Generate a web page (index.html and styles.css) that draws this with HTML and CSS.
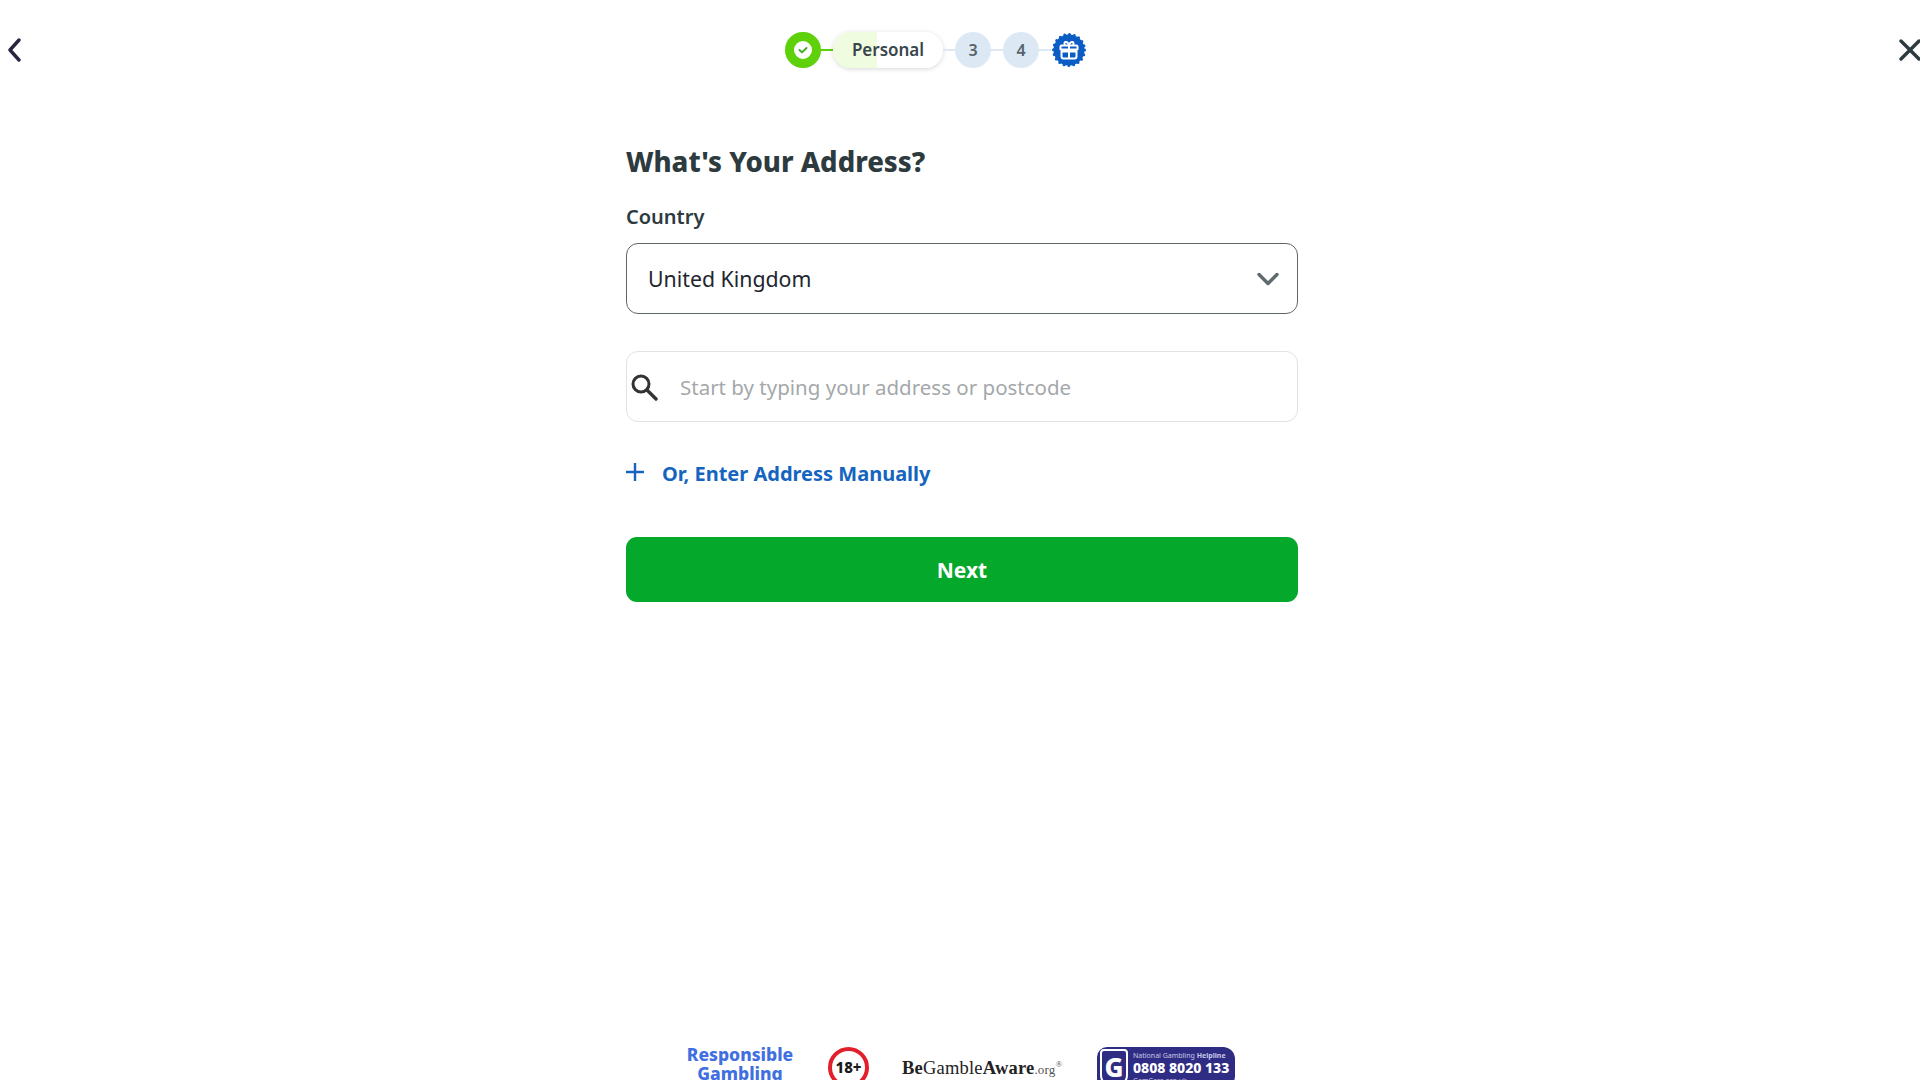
FILE: index.html
```html
<!DOCTYPE html>
<html lang="en">
<head>
    <meta charset="UTF-8">
    <meta name="viewport" content="width=device-width, initial-scale=1.0">
    <title>What's Your Address?</title>
    <link rel="stylesheet" href="styles.css">
</head>
<body>
    <header class="top-bar">
        <button class="icon-button back-button" aria-label="Back">
            <svg width="14" height="24" viewBox="0 0 14 24"><path d="M12 2 3 12l9 10" fill="none" stroke="#2b2440" stroke-width="3.4" stroke-linecap="round" stroke-linejoin="round"/></svg>
        </button>

        <div class="stepper">
            <span class="step step-done">
                <svg width="36" height="36" viewBox="0 0 36 36"><circle cx="18" cy="18" r="13.5" fill="#fff" stroke="#5ed10a" stroke-width="9"/><path d="M14.500 18l2.500 2.400 4.500-4.400" fill="none" stroke="#3fae2a" stroke-width="2" stroke-linecap="round" stroke-linejoin="round"/></svg>
            </span>
            <span class="step-line step-line-done"></span>
            <span class="step-pill">Personal</span>
            <span class="step-line"></span>
            <span class="step">3</span>
            <span class="step-line"></span>
            <span class="step">4</span>
            <span class="step-line"></span>
            <span class="step-gift">
                <svg width="36" height="36" viewBox="0 0 36 36">
                    <circle cx="18" cy="18" r="15.5" fill="#0b5cc4"/>
                    <circle cx="18" cy="18" r="15.5" fill="none" stroke="#0b5cc4" stroke-width="3" stroke-linecap="round" stroke-dasharray="0 4.87"/>
                    <path d="M10.5 13.5h15a1 1 0 0 1 1 1v3h-17v-3a1 1 0 0 1 1-1zM10.5 19.500h15v5a2 2 0 0 1-2 2h-11a2 2 0 0 1-2-2z" fill="none" stroke="#fff" stroke-width="2" stroke-linejoin="round"/>
                    <path d="M18 13v13M14 13c-2-3 2-5 4 0 2-5 6-3 4 0" fill="none" stroke="#fff" stroke-width="2"/>
                </svg>
            </span>
        </div>

        <button class="icon-button close-button" aria-label="Close">
            <svg width="22" height="22" viewBox="0 0 22 22"><path d="M2 2l18 18M20 2 2 20" fill="none" stroke="#2d3b3f" stroke-width="3.4" stroke-linecap="round"/></svg>
        </button>
    </header>

    <main class="address-form">
        <h1 class="form-title">What's Your Address?</h1>

        <label class="field-label">Country</label>
        <div class="select-box">
            <span>United Kingdom</span>
            <svg width="24" height="14" viewBox="0 0 24 14"><path d="M3 2.500l9 9 9-9" fill="none" stroke="#5f6a6c" stroke-width="3.4" stroke-linecap="round" stroke-linejoin="round"/></svg>
        </div>

        <div class="search-box">
            <svg width="28" height="28" viewBox="0 0 28 28"><circle cx="11" cy="11" r="8" fill="none" stroke="#333" stroke-width="3"/><path d="M17 17l9 9" stroke="#333" stroke-width="3.400" stroke-linecap="round"/></svg>
            <span class="placeholder">Start by typing your address or postcode</span>
        </div>

        <a class="manual-link" href="#">
            <svg class="plus-icon" width="18" height="18" viewBox="0 0 18 18"><path d="M9 0v18M0 9h18" stroke="#1565c0" stroke-width="2.400"/></svg>
            <span>Or, Enter Address Manually</span>
        </a>

        <button class="next-button">Next</button>
    </main>

    <footer class="badges">
        <div class="rg-text">Responsible<br>Gambling</div>
        <div class="age-badge">18+</div>
        <div class="bga-logo"><b>Be</b>Gamble<b>Aware</b><small>.org</small><sup>®</sup></div>
        <div class="gamcare">
            <span class="gamcare-g">G</span>
            <div class="gamcare-text">
                <span class="gamcare-small">National Gambling <b>Helpline</b></span>
                <span class="gamcare-phone">0808 8020 133</span>
                <span class="gamcare-small">GamCare.org.uk</span>
            </div>
        </div>
    </footer>
</body>
</html>
```

FILE: styles.css
```css
html, body {
    height: 1080px;
    margin: 0;
    overflow: hidden;
}
body {
    font-family: "Noto Sans", Arial, sans-serif;
    background-color: #fff;
    color: #2d3b3f;
}
.top-bar {
    display: grid;
    grid-template-columns: 785px auto 1fr;
    align-items: center;
    height: 36px;
    padding-top: 32px;
}
.icon-button {
    display: flex;
    padding: 0;
    border: none;
    background: none;
    cursor: pointer;
}
.back-button {
    margin-left: 7px;
}
.close-button {
    justify-self: end;
    margin-right: -1px;
}
.stepper {
    display: flex;
    align-items: center;
}
.step,
.step-gift {
    display: flex;
    align-items: center;
    justify-content: center;
    width: 36px;
    height: 36px;
    border-radius: 50%;
    font-size: 16px;
    font-weight: 600;
}
.step {
    background-color: #dce9f5;
    color: #56636b;
}
.step-line {
    width: 12px;
    height: 2px;
    background-color: #dce9f5;
}
.step-line-done {
    background-color: #5ed10a;
}
.step-pill {
    width: 110px;
    height: 36px;
    border-radius: 18px;
    background: linear-gradient(90deg, #effcdf 0, #effcdf 40%, #fff 40%);
    box-shadow: 0 1px 5px rgba(0, 0, 0, 0.16);
    font-size: 17px;
    font-weight: 600;
    line-height: 36px;
    text-align: center;
    color: #38464c;
}
.address-form {
    display: flex;
    flex-direction: column;
    width: 672px;
    margin-left: 626px;
}
.form-title {
    margin: 74px 0 0;
    font-size: 27.5px;
    line-height: 40px;
    font-weight: 800;
}
.field-label {
    margin-top: 21px;
    font-size: 20px;
    line-height: 28px;
    font-weight: 600;
}
.select-box,
.search-box {
    display: flex;
    align-items: center;
    box-sizing: border-box;
    height: 71px;
    border-radius: 12px;
}
.select-box {
    justify-content: space-between;
    margin-top: 12px;
    padding: 0 17px 0 21px;
    border: 1.5px solid #5f6668;
    font-size: 21.3px;
    color: #22262e;
}
.search-box {
    gap: 22px;
    margin-top: 37px;
    padding-left: 3px;
    border: 1.5px solid #dfe3e5;
    font-size: 20.5px;
}
.placeholder {
    color: #a4a8aa;
}
.manual-link {
    display: flex;
    align-items: center;
    gap: 18px;
    margin-top: 36px;
    font-size: 20px;
    line-height: 32px;
    font-weight: 700;
    color: #1565c0;
    text-decoration: none;
}
.plus-icon {
    margin-bottom: 4px;
}
.next-button {
    height: 65px;
    margin-top: 47px;
    border: none;
    border-radius: 11px;
    background-color: #04a82b;
    color: #fff;
    font-family: inherit;
    font-size: 21px;
    font-weight: 700;
    cursor: pointer;
}
.badges {
    display: flex;
    align-items: flex-start;
    width: 600px;
    margin: 445px 0 0 680px;
}
.rg-text {
    width: 120px;
    margin-top: -2px;
    font-size: 17.5px;
    line-height: 19px;
    font-weight: 800;
    text-align: center;
    color: #3f6fe0;
}
.age-badge {
    box-sizing: border-box;
    width: 41px;
    height: 41px;
    margin: 0 0 0 28px;
    border: 4px solid #e2202c;
    border-radius: 50%;
    font-size: 15px;
    font-weight: 800;
    line-height: 33px;
    text-align: center;
    color: #1a1a1a;
}
.bga-logo {
    width: 160px;
    margin: 11px 0 0 33px;
    font-family: "Liberation Serif", serif;
    font-size: 18.5px;
    letter-spacing: 0.2px;
    white-space: nowrap;
    color: #222;
}
.bga-logo small {
    font-size: 13px;
    color: #555;
}
.bga-logo sup {
    font-size: 9px;
    color: #555;
}
.gamcare {
    display: flex;
    align-items: center;
    gap: 5px;
    box-sizing: border-box;
    width: 138px;
    height: 41px;
    margin-left: 35px;
    padding-left: 3px;
    border-radius: 10px 12px 12px 0;
    background-color: #2f2d83;
    color: #fff;
}
.gamcare-g {
    box-sizing: border-box;
    width: 28px;
    height: 38px;
    border: 2px solid #fff;
    border-radius: 4px 4px 12px 12px;
    font-size: 26px;
    font-weight: 800;
    line-height: 33px;
    text-align: center;
}
.gamcare-text {
    display: flex;
    flex-direction: column;
    white-space: nowrap;
}
.gamcare-small {
    font-size: 7px;
    line-height: 9px;
    color: #c9c8e8;
}
.gamcare-phone {
    font-size: 14px;
    line-height: 16px;
    font-weight: 800;
}
```
